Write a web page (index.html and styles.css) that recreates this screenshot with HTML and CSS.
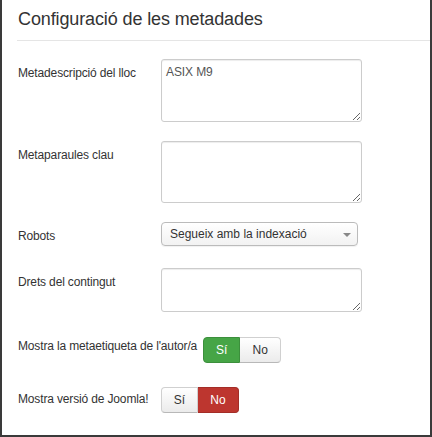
FILE: index.html
```html
<!DOCTYPE html>
<html lang="ca">
<head>
<meta charset="utf-8">
<link rel="stylesheet" href="styles.css">
</head>
<body>
<div class="frame">
  <h2 class="title">Configuració de les metadades</h2>
  <div class="rule"></div>

  <div class="row">
    <label class="label">Metadescripció del lloc</label>
    <textarea class="area area-lg">ASIX M9</textarea>
  </div>

  <div class="row">
    <label class="label">Metaparaules clau</label>
    <textarea class="area area-lg2"></textarea>
  </div>

  <div class="row row-select">
    <label class="label">Robots</label>
    <div class="select">
      <span>Segueix amb la indexació</span>
      <span class="caret"></span>
    </div>
  </div>

  <div class="row row-small">
    <label class="label">Drets del contingut</label>
    <textarea class="area area-sm"></textarea>
  </div>

  <div class="row row-toggle1">
    <label class="label label-tight">Mostra la metaetiqueta de l'autor/a</label>
    <div class="toggle">
      <span class="btn btn-yes active-yes">Sí</span>
      <span class="btn btn-no">No</span>
    </div>
  </div>

  <div class="row row-toggle2">
    <label class="label label-t2">Mostra versió de Joomla!</label>
    <div class="toggle">
      <span class="btn btn-yes">Sí</span>
      <span class="btn btn-no active-no">No</span>
    </div>
  </div>
</div>
</body>
</html>
```

FILE: styles.css
```css
html, body {
  margin: 0;
  padding: 0;
  background: #fff;
}

.frame {
  box-sizing: border-box;
  width: 432px;
  height: 437px;
  border-left: 2px solid #3a3a3a;
  border-right: 2px solid #3a3a3a;
  border-bottom: 2px solid #3a3a3a;
  padding-left: 15px;
  font-family: "Liberation Sans", Arial, sans-serif;
  color: #333;
  overflow: hidden;
}

.title {
  margin: 0;
  padding: 8px 0 0 1px;
  font-size: 18px;
  line-height: 22px;
  font-weight: normal;
  letter-spacing: -0.12px;
  color: #333;
  height: 32px;
  box-sizing: border-box;
  margin-bottom: 8px;
}

.rule {
  height: 1px;
  background: #e5e5e5;
  margin-bottom: 18px;
}

.row {
  display: flex;
  align-items: flex-start;
  margin-bottom: 19px;
}

.row-select { margin-bottom: 22px; }
.row-small { margin-bottom: 25px; }
.row-toggle1 { margin-bottom: 24px; }

.label {
  box-sizing: border-box;
  min-width: 144px;
  padding: 5px 6px 0 1px;
  font-size: 12px;
  line-height: 18px;
  letter-spacing: -0.15px;
  color: #333;
}

.label-tight { padding-top: 0; }
.label-t2 { padding-top: 3px; }

.area {
  box-sizing: border-box;
  width: 201px;
  margin: 0;
  padding: 3px 4px;
  border: 1px solid #ccc;
  border-radius: 3px;
  box-shadow: inset 0 1px 1px rgba(0, 0, 0, 0.075);
  font-family: "Liberation Sans", Arial, sans-serif;
  font-size: 12px;
  line-height: 18px;
  letter-spacing: -0.1px;
  color: #555;
  background: #fff;
  outline: none;
}

.area-lg { height: 63px; }
.area-lg2 { height: 62px; }
.area-sm { height: 44px; }

.select {
  box-sizing: border-box;
  width: 197px;
  height: 24px;
  display: flex;
  align-items: center;
  justify-content: space-between;
  padding: 0 6px 0 8px;
  border: 1px solid #bbb;
  border-radius: 4px;
  background: linear-gradient(#ffffff, #f2f2f2);
  box-shadow: 0 1px 1px rgba(0, 0, 0, 0.06);
  font-size: 12px;
  color: #333;
}

.caret {
  width: 0;
  height: 0;
  border-left: 4px solid transparent;
  border-right: 4px solid transparent;
  border-top: 4px solid #888;
  margin-top: 1px;
}

.toggle {
  display: flex;
  height: 26px;
}

.btn {
  box-sizing: border-box;
  display: flex;
  align-items: center;
  justify-content: center;
  height: 26px;
  font-size: 12px;
  color: #333;
  background: linear-gradient(#ffffff, #ebebeb);
  border: 1px solid #d0d0d0;
  border-bottom-color: #b8b8b8;
}

.btn-yes {
  width: 37px;
  border-radius: 4px 0 0 4px;
}

.btn-no {
  width: 41px;
  border-left: none;
  border-radius: 0 4px 4px 0;
}

.active-yes {
  background: #46a546;
  border-color: #3c8f3c;
  color: #fff;
}

.active-no {
  background: #bd362f;
  border-color: #a32d27;
  color: #fff;
}
```
